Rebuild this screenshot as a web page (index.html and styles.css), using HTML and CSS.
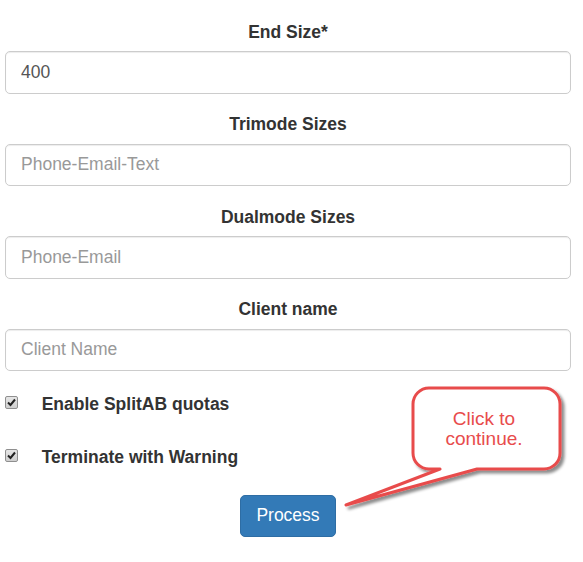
FILE: index.html
```html
<!DOCTYPE html>
<html lang="en">
<head>
<meta charset="utf-8">
<title>Form</title>
<link rel="stylesheet" href="styles.css">
</head>
<body>
<form class="form">
  <div class="group">
    <label class="label">End Size*</label>
    <input class="input" type="text" value="400">
  </div>
  <div class="group">
    <label class="label">Trimode Sizes</label>
    <input class="input" type="text" placeholder="Phone-Email-Text">
  </div>
  <div class="group">
    <label class="label">Dualmode Sizes</label>
    <input class="input" type="text" placeholder="Phone-Email">
  </div>
  <div class="group">
    <label class="label">Client name</label>
    <input class="input" type="text" placeholder="Client Name">
  </div>
  <div class="checks">
    <div class="check">
      <span class="box"><svg width="13" height="13" viewBox="0 0 13 13"><path d="M3 6.5 L5.5 9 L10 3.5" fill="none" stroke="#222" stroke-width="2"/></svg></span>
      <span class="check-text">Enable SplitAB quotas</span>
    </div>
    <div class="check">
      <span class="box"><svg width="13" height="13" viewBox="0 0 13 13"><path d="M3 6.5 L5.5 9 L10 3.5" fill="none" stroke="#222" stroke-width="2"/></svg></span>
      <span class="check-text">Terminate with Warning</span>
    </div>
  </div>
  <div class="actions">
    <button class="btn" type="button">Process</button>
  </div>
</form>
<svg class="callout" width="253" height="140" viewBox="0 0 253 140">
  <defs>
    <filter id="sh" x="-20%" y="-20%" width="140%" height="140%">
      <feDropShadow dx="3" dy="3" stdDeviation="1.6" flood-color="#000" flood-opacity="0.45"/>
    </filter>
  </defs>
  <path d="M99 8 H214 A16 16 0 0 1 230 24 V73 A16 16 0 0 1 214 89 H147 L16 125 L110 89 H99 A16 16 0 0 1 83 73 V24 A16 16 0 0 1 99 8 Z" fill="#fff" stroke="#e84c4c" stroke-width="3" stroke-linejoin="round" filter="url(#sh)"/>
  <text class="callout-text" x="154" text-anchor="middle"><tspan x="154" y="45">Click to</tspan><tspan x="154" y="65">continue.</tspan></text>
</svg>
</body>
</html>
```
FILE: styles.css
```css
html, body {
  margin: 0;
  padding: 0;
  background: #fff;
}
body {
  font-family: "Liberation Sans", Arial, Helvetica, sans-serif;
  font-size: 17.5px;
  line-height: 25px;
  color: #333;
}
.form {
  width: 566px;
  margin: 0 0 0 5px;
  padding-top: 19.75px;
}
.group {
  margin-bottom: 18.75px;
}
.label {
  display: block;
  text-align: center;
  font-weight: bold;
  line-height: 25px;
  margin-bottom: 6.25px;
}
.input {
  display: block;
  box-sizing: border-box;
  width: 100%;
  height: 42.5px;
  padding: 7.5px 15px;
  border: 1px solid #ccc;
  border-radius: 5px;
  box-shadow: inset 0 1px 1px rgba(0,0,0,.075);
  font-family: inherit;
  font-size: 17.5px;
  line-height: 25px;
  color: #555;
  background: #fff;
  outline: none;
}
.input::placeholder {
  color: #999;
}
.checks {
  display: flex;
  flex-direction: column;
  gap: 28px;
  padding-top: 2px;
}
.check {
  display: flex;
  align-items: center;
  height: 25px;
}
.box {
  display: block;
  width: 11px;
  height: 11px;
  border: 1px solid #8f8f8f;
  border-radius: 2px;
  background: linear-gradient(#e6e6e6, #cfcfcf);
  margin-right: 23.7px;
  margin-top: -3px;
  position: relative;
}
.box svg {
  display: block;
  margin: -1px 0 0 -1px;
}
.check-text {
  font-weight: bold;
}
.actions {
  margin-top: 25px;
  text-align: center;
}
.btn {
  display: inline-block;
  padding: 7.5px 15px;
  font-family: inherit;
  font-size: 17.5px;
  line-height: 25px;
  color: #fff;
  background: #337ab7;
  border: 1px solid #2e6da4;
  border-radius: 5px;
}
.callout {
  position: absolute;
  left: 330px;
  top: 380px;
}
.callout-text {
  font-family: "Liberation Sans", Arial, sans-serif;
  font-size: 19px;
  fill: #e84c4c;
}
```
